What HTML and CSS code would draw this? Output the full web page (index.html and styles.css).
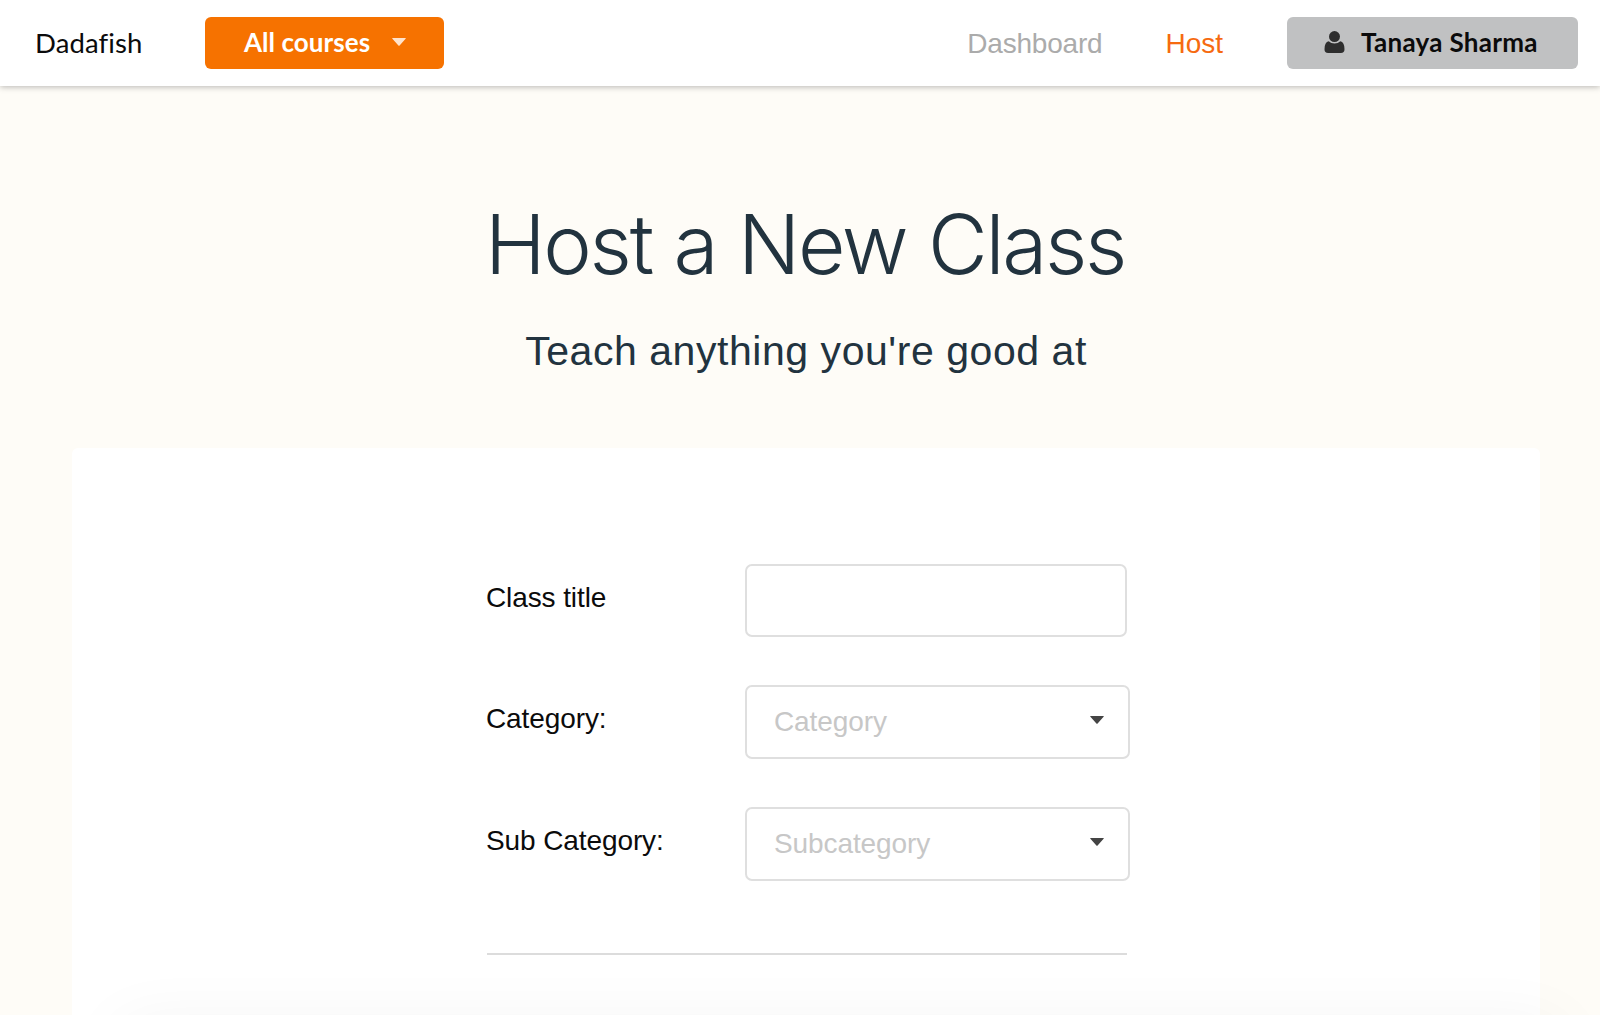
FILE: index.html
```html
<!DOCTYPE html>
<html lang="en">
<head>
<meta charset="utf-8">
<title>Dadafish – Host a New Class</title>
<link rel="stylesheet" href="styles.css">
</head>
<body>
<header class="navbar">
  <a class="brand">Dadafish</a>
  <button class="btn btn-courses">All courses
    <svg class="caret" viewBox="0 0 14 8"><path d="M.4 0h13.2q.4.4 0 .8L7.6 7.4q-.6.5-1.2 0L.4.8Q0 .4.4 0z"/></svg>
  </button>
  <nav class="links">
    <a class="link">Dashboard</a>
    <a class="link link-active">Host</a>
  </nav>
  <button class="btn btn-user">
    <svg class="user-icon" viewBox="0 0 20 22"><circle cx="10" cy="5.6" r="5.5"/><path d="M4.2 10.2Q0 11 0 18.2 0 22 3.6 22h12.8q3.6 0 3.6-3.8 0-7.2-4.2-8-2.3 2.4-5.8 2.4T4.2 10.2z"/></svg>
    <span>Tanaya Sharma</span>
  </button>
</header>
<main class="page">
  <h1 class="title">Host a New Class</h1>
  <p class="subtitle">Teach anything you're good at</p>
  <section class="card">
    <form class="form">
      <div class="row">
        <label class="label">Class title</label>
        <input class="field" type="text">
      </div>
      <div class="row">
        <label class="label">Category:</label>
        <div class="select"><span class="placeholder">Category</span>
          <svg class="caret" viewBox="0 0 14 8"><path d="M.4 0h13.2q.4.4 0 .8L7.6 7.4q-.6.5-1.2 0L.4.8Q0 .4.4 0z"/></svg>
        </div>
      </div>
      <div class="row">
        <label class="label">Sub Category:</label>
        <div class="select"><span class="placeholder">Subcategory</span>
          <svg class="caret" viewBox="0 0 14 8"><path d="M.4 0h13.2q.4.4 0 .8L7.6 7.4q-.6.5-1.2 0L.4.8Q0 .4.4 0z"/></svg>
        </div>
      </div>
      <hr class="divider">
    </form>
  </section>
</main>
<div class="bottom-shadow"></div>
</body>
</html>
```
FILE: styles.css
```css
* { box-sizing: border-box; }
body {
  margin: 0;
  height: 1015px;
  overflow: hidden;
  display: flex;
  flex-direction: column;
  background: #fefcf7;
  color: #0b0b0b;
  font: 28px/32px "Liberation Sans", Arial, sans-serif;
}
.navbar {
  flex: none;
  height: 86px;
  padding: 0 22px 0 35px;
  display: flex;
  align-items: center;
  background: #fff;
  box-shadow: 0 1px 6px rgba(0, 0, 0, .28);
}
.brand {
  width: 170px;
  font-family: Lato, sans-serif;
  font-size: 27.5px;
  letter-spacing: .1px;
  font-variant-ligatures: none;
}
.btn {
  height: 52px;
  border: 0;
  border-radius: 6px;
  padding: 0 0 2px;
  display: flex;
  align-items: center;
  font: bold 26px/32px Lato, sans-serif;
}
.btn-courses {
  width: 239px;
  padding-left: 39px;
  gap: 22px;
  background: #f67200;
  color: #fff;
  letter-spacing: .05px;
}
.btn-courses .caret { fill: #ffe3cc; }
.caret { width: 14px; height: 8px; flex: none; fill: #444; }
.links {
  margin-left: auto;
  display: flex;
  gap: 63px;
  padding-top: 2px;
}
.link { color: #ababab; letter-spacing: -.2px; }
.link-active { color: #f66a10; letter-spacing: 0; }
.btn-user {
  width: 291px;
  margin-left: 64px;
  padding-left: 37px;
  gap: 16px;
  background: #c0c1c2;
  color: #0b0b0b;
  letter-spacing: .3px;
}
.user-icon { width: 21px; height: 22px; fill: #2e2e2e; }
.page {
  flex: 1;
  display: flex;
  flex-direction: column;
  padding: 109px 60px 0 72px;
  text-align: center;
  color: #22333f;
}
.title {
  margin: 0;
  padding-right: 2px;
  font: 300 82px/100px Inter, "Liberation Sans", sans-serif;
  letter-spacing: -2.3px;
  word-spacing: 1px;
}
.subtitle {
  margin: 32px 0 0;
  font-size: 41px;
  line-height: 48px;
  letter-spacing: .55px;
}
.card {
  flex: 1;
  margin-top: 73px;
  padding: 116px 413px 0 414px;
  border-radius: 6px 6px 0 0;
  background: #fff;
  color: #0b0b0b;
  text-align: left;
}
.row {
  display: grid;
  grid-template-columns: 259px 385px;
  margin: 0 -3px 48px 0;
}
.label { padding-top: 18px; letter-spacing: -.1px; }
.field, .select {
  border: 2px solid #dfdfdf;
  border-radius: 7px;
  background: #fff;
}
.field { width: 382px; height: 73px; }
.select {
  height: 74px;
  padding: 0 24px 0 27px;
  display: flex;
  align-items: center;
  justify-content: space-between;
}
.select .caret { margin-bottom: 4px; }
.placeholder { color: #c7c7c7; letter-spacing: -.1px; }
.divider {
  height: 2px;
  margin: 72px 0 0 1px;
  border: 0;
  background: #dcdcdc;
}
/* soft shade rising from a panel just below the fold */
.bottom-shadow {
  position: fixed;
  left: 120px;
  right: 40px;
  top: 1024px;
  height: 80px;
  box-shadow: 0 0 66px rgba(0, 0, 0, .05);
}
```
